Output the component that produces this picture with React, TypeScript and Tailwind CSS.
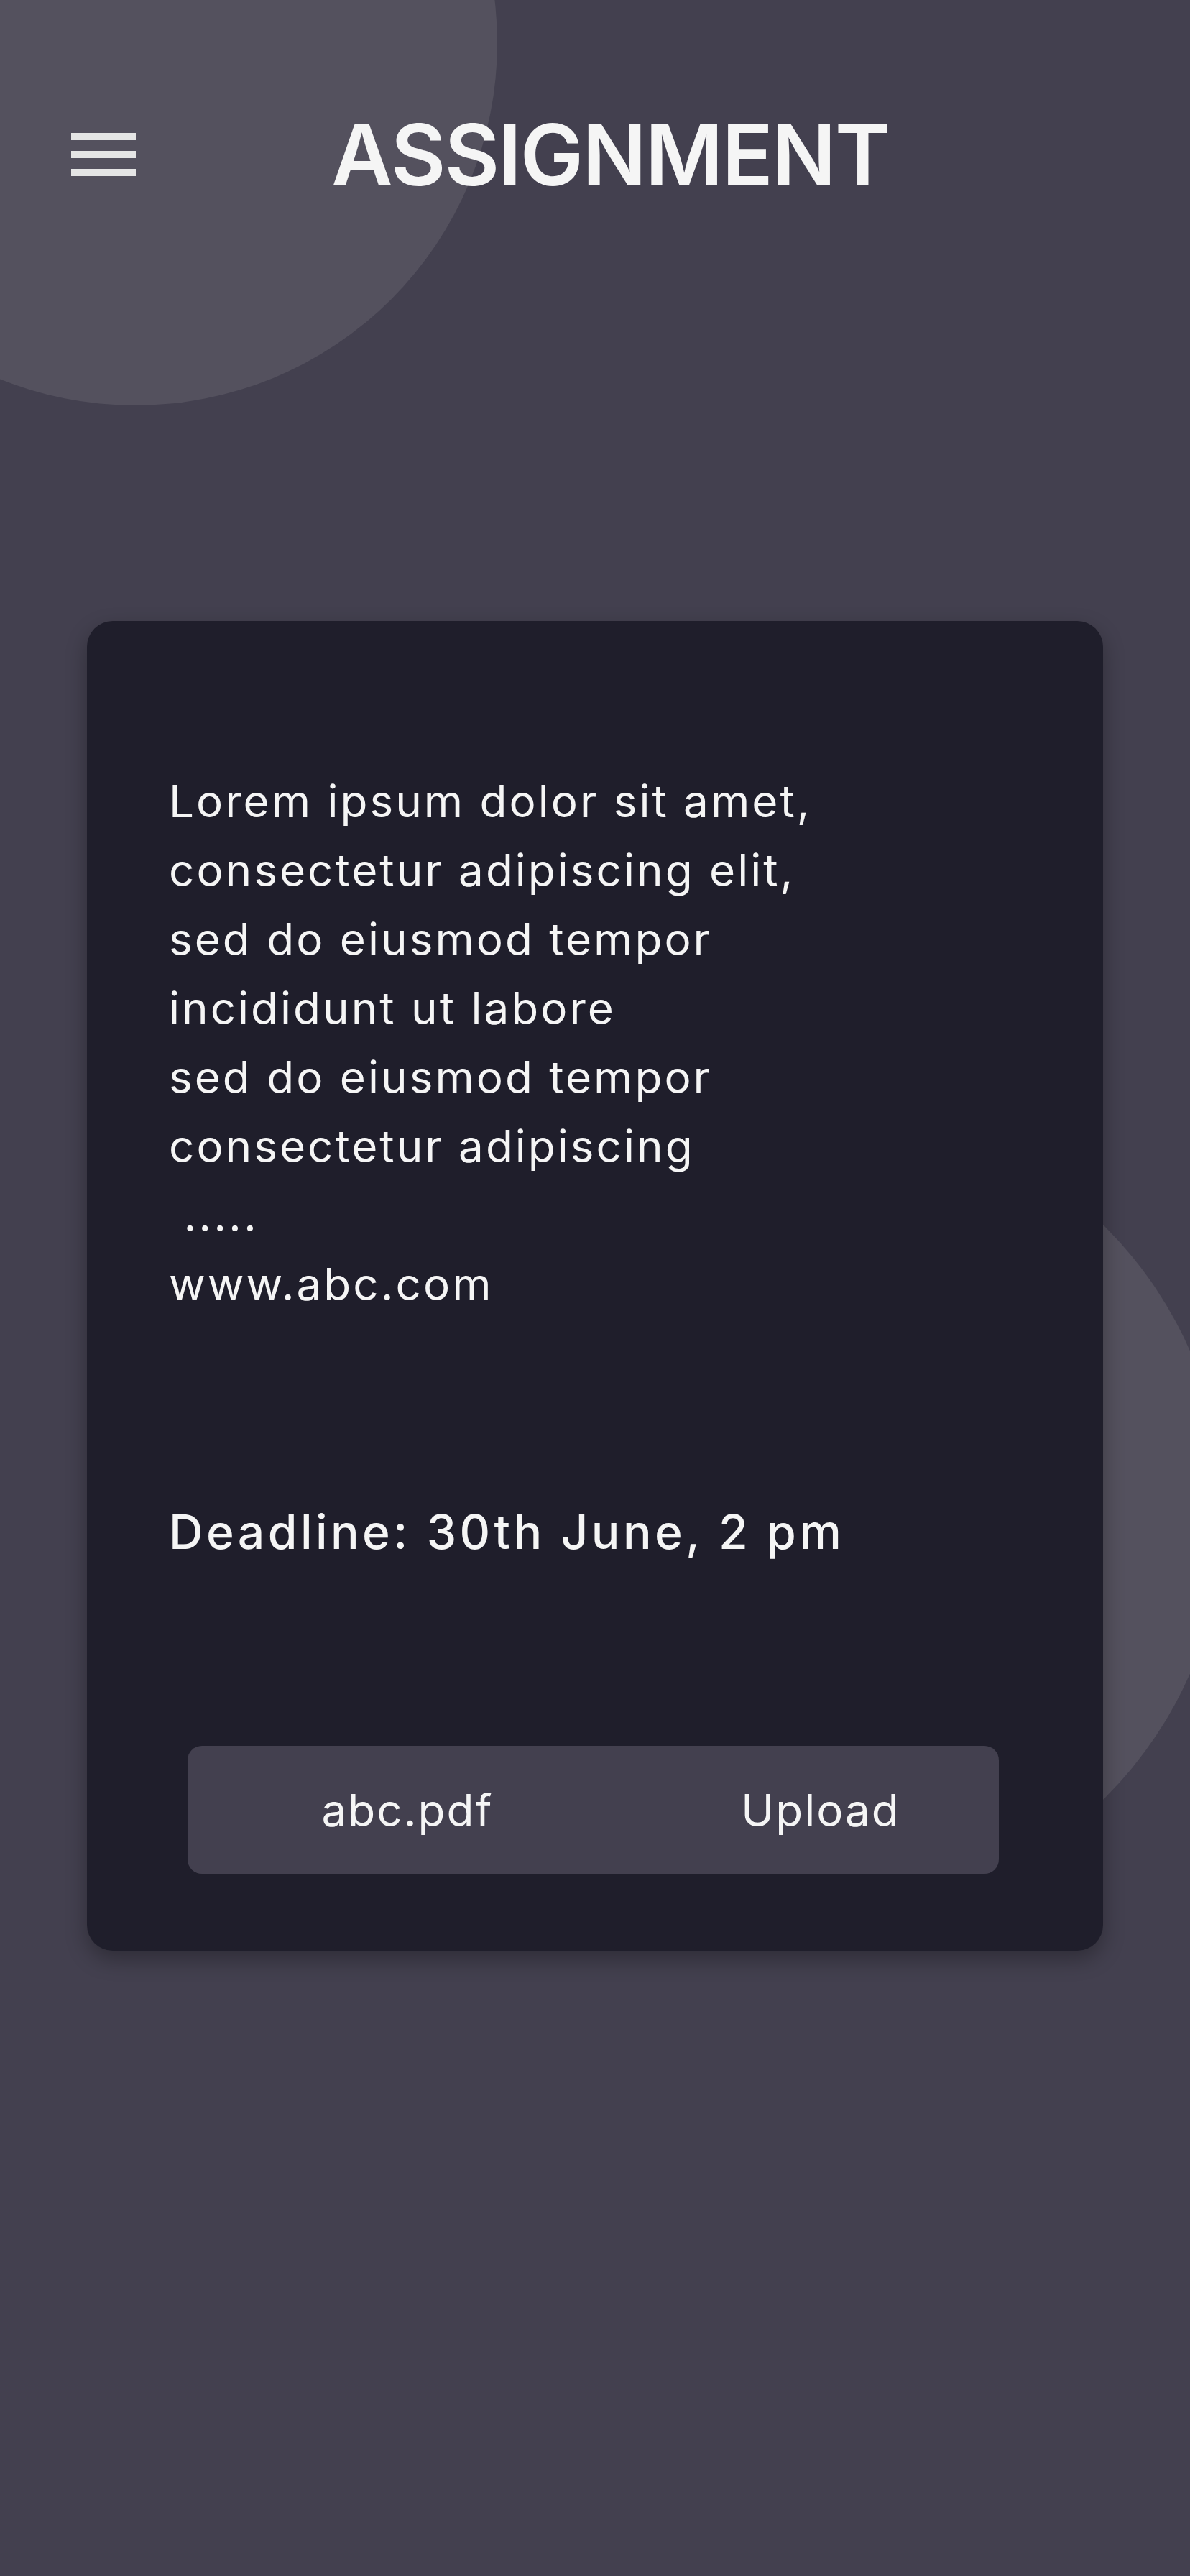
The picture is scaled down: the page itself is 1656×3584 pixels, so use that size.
export default function App() {
  const lines = [
    'Lorem ipsum dolor sit amet,',
    'consectetur adipiscing elit,',
    'sed do eiusmod tempor',
    'incididunt ut labore',
    'sed do eiusmod tempor',
    'consectetur adipiscing',
    '\u00a0.....',
    'www.abc.com',
  ];

  return (
    <div className="relative min-h-screen overflow-hidden bg-[#43404f] font-['Inter','Noto_Sans',sans-serif] text-[#f5f5f5]">
      {/* decorative circles */}
      <div className="absolute left-[-316px] top-[-444px] h-[1008px] w-[1008px] rounded-full bg-[#54515e]" />
      <div className="absolute left-[583px] top-[1544px] h-[1120px] w-[1120px] rounded-full bg-[#54515e]" />

      <div className="relative">
        <header className="flex h-[160px] items-center pl-[99px] mt-[135px]">
          <button className="flex w-[90px] flex-col gap-[15px]">
            <span className="block h-[10px] w-full bg-[#e5e5e5]" />
            <span className="block h-[10px] w-full bg-[#e5e5e5]" />
            <span className="block h-[10px] w-full bg-[#e5e5e5]" />
          </button>
          <h1 className="ml-[272px] text-[118px] font-semibold leading-none tracking-[-2px]">ASSIGNMENT</h1>
        </header>

        <main className="ml-[121px] mt-[569px] w-[1414px] rounded-[36px] bg-[#1f1e2b] pl-[114px] pt-[203px] pb-[107px] shadow-[0_12px_30px_rgba(0,0,0,0.3)]">
          <div className="text-[62px] leading-[96px] tracking-[3px]">
            {lines.map((l, i) => (
              <p key={i}>{l}</p>
            ))}
          </div>

          <p className="mt-[246px] text-[66px] font-medium leading-[100px] tracking-[4.4px]">Deadline: 30th June, 2 pm</p>

          <div className="ml-[26px] mt-[248px] flex h-[178px] w-[1129px] items-center rounded-[20px] bg-[#43404f] pl-[66px] text-[62px] tracking-[2px]">
            <span className="w-[480px] text-center">abc.pdf</span>
            <span className="ml-[95px] w-[480px] text-center">Upload</span>
          </div>
        </main>
      </div>
    </div>
  );
}
